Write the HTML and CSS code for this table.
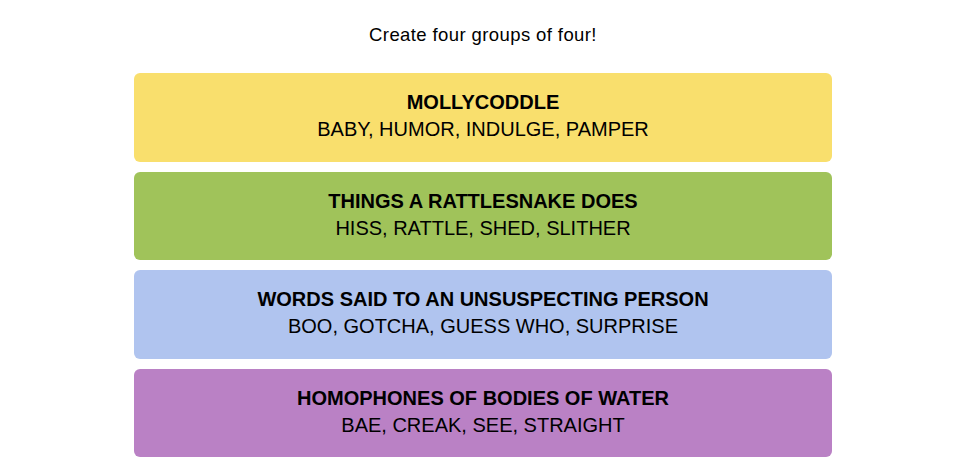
FILE: index.html
```html
<!DOCTYPE html>
<html>
<head>
<meta charset="utf-8">
<link rel="stylesheet" href="styles.css">
</head>
<body>
<main class="game">
  <p class="prompt">Create four groups of four!</p>
  <section class="groups">
    <div class="group yellow">
      <h3 class="group-title">MOLLYCODDLE</h3>
      <p class="group-words">BABY, HUMOR, INDULGE, PAMPER</p>
    </div>
    <div class="group green">
      <h3 class="group-title">THINGS A RATTLESNAKE DOES</h3>
      <p class="group-words">HISS, RATTLE, SHED, SLITHER</p>
    </div>
    <div class="group blue">
      <h3 class="group-title">WORDS SAID TO AN UNSUSPECTING PERSON</h3>
      <p class="group-words">BOO, GOTCHA, GUESS WHO, SURPRISE</p>
    </div>
    <div class="group purple">
      <h3 class="group-title">HOMOPHONES OF BODIES OF WATER</h3>
      <p class="group-words">BAE, CREAK, SEE, STRAIGHT</p>
    </div>
  </section>
</main>
</body>
</html>
```
FILE: styles.css
```css
* { box-sizing: border-box; }
html, body { margin: 0; padding: 0; background: #fff; }
body {
  font-family: "Liberation Sans", Arial, sans-serif;
  color: #000;
}
.game {
  display: flex;
  flex-direction: column;
  align-items: center;
  padding-top: 23px;
  padding-left: 6px;
}
.prompt {
  margin: 0;
  height: 24px;
  line-height: 24px;
  font-size: 18.5px;
  letter-spacing: 0.4px;
}
.groups {
  margin-top: 26px;
  width: 698px;
  display: flex;
  flex-direction: column;
  gap: 10px;
}
.group {
  height: 88.5px;
  border-radius: 6px;
  padding-bottom: 2px;
  display: flex;
  flex-direction: column;
  align-items: center;
  justify-content: center;
}
.group-title {
  margin: 0;
  font-size: 20px;
  line-height: 27px;
  font-weight: 700;
  letter-spacing: 0;
}
.group-words {
  margin: 0;
  font-size: 20px;
  line-height: 27px;
  letter-spacing: 0;
}
.yellow { background: #f9df6d; }
.green { background: #a0c35a; }
.blue { background: #b0c4ef; }
.purple { background: #ba81c5; }
```
